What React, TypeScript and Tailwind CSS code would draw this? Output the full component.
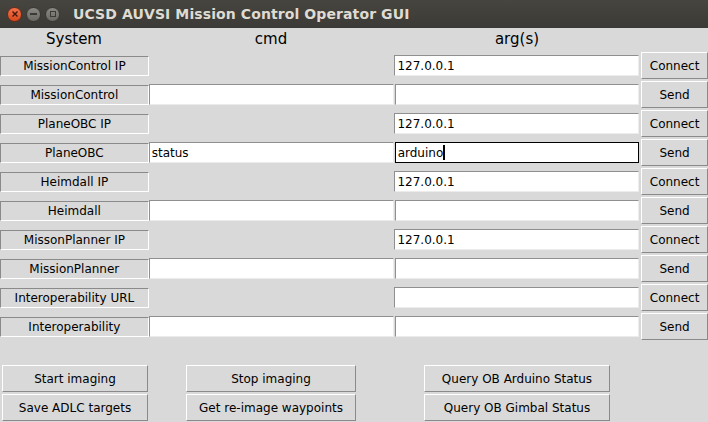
import React from "react";

const rows: { label: string; cmd?: string; arg?: string; argOnly?: boolean; btn: string; focus?: boolean }[] = [
  { label: "MissionControl IP", arg: "127.0.0.1", argOnly: true, btn: "Connect" },
  { label: "MissionControl", cmd: "", arg: "", btn: "Send" },
  { label: "PlaneOBC IP", arg: "127.0.0.1", argOnly: true, btn: "Connect" },
  { label: "PlaneOBC", cmd: "status", arg: "arduino", btn: "Send", focus: true },
  { label: "Heimdall IP", arg: "127.0.0.1", argOnly: true, btn: "Connect" },
  { label: "Heimdall", cmd: "", arg: "", btn: "Send" },
  { label: "MissonPlanner IP", arg: "127.0.0.1", argOnly: true, btn: "Connect" },
  { label: "MissionPlanner", cmd: "", arg: "", btn: "Send" },
  { label: "Interoperability URL", arg: "", argOnly: true, btn: "Connect" },
  { label: "Interoperability", cmd: "", arg: "", btn: "Send" },
];

function Entry({ value, focus }: { value: string; focus?: boolean }) {
  return (
    <div
      className={
        "w-[245px] h-[21px] bg-white flex items-center pl-[2px] text-[12px] text-black " +
        (focus
          ? "border border-black"
          : "border-t border-l border-t-[#8f8f8f] border-l-[#8f8f8f] border-b border-r border-b-[#ececec] border-r-[#ececec]")
      }
    >
      <span>{value}</span>
      {focus && <span className="w-[2px] h-[15px] bg-black"></span>}
    </div>
  );
}

function Btn({ children, w }: { children: React.ReactNode; w: string }) {
  return (
    <div
      className={
        w +
        " h-[27px] bg-[#d9d9d9] border-t border-l border-t-white border-l-white border-b border-r border-b-[#8a8a8a] border-r-[#8a8a8a] flex items-center justify-center text-[12px] text-black"
      }
    >
      {children}
    </div>
  );
}

export default function App() {
  return (
    <div
      className="w-[708px] h-[422px] bg-[#d9d9d9] overflow-hidden flex flex-col"
      style={{ fontFamily: '"DejaVu Sans", sans-serif' }}
    >
      {/* title bar */}
      <div className="h-[28px] bg-gradient-to-b from-[#46453f] to-[#3b3a36] flex items-center shrink-0">
        <div className="flex items-center gap-[4px] ml-[7px]">
          <div className="w-[15px] h-[15px] rounded-full bg-gradient-to-b from-[#f3714b] to-[#d8481b] border border-[#6b2c14] flex items-center justify-center">
            <svg width="8" height="8" viewBox="0 0 8 8">
              <path d="M1.5 1.5 L6.5 6.5 M6.5 1.5 L1.5 6.5" stroke="#3d1a0c" strokeWidth="1.4" />
            </svg>
          </div>
          <div className="w-[15px] h-[15px] rounded-full bg-gradient-to-b from-[#8a8984] to-[#6a6964] border border-[#3a3935] flex items-center justify-center">
            <div className="w-[7px] h-[2px] bg-[#3b3a36]"></div>
          </div>
          <div className="w-[15px] h-[15px] rounded-full bg-gradient-to-b from-[#8a8984] to-[#6a6964] border border-[#3a3935] flex items-center justify-center">
            <div className="w-[6px] h-[6px] border border-[#3b3a36]"></div>
          </div>
        </div>
        <div className="ml-[13px] text-[14px] font-bold text-[#dfdbd2] tracking-[0.1px]">
          UCSD AUVSI Mission Control Operator GUI
        </div>
      </div>

      {/* header */}
      <div className="h-[23px] flex items-center text-[15px] text-black shrink-0">
        <div className="w-[148px] text-center">System</div>
        <div className="w-[246px] text-center">cmd</div>
        <div className="w-[246px] text-center">arg(s)</div>
      </div>

      {/* rows */}
      <div className="flex flex-col">
        {rows.map((r, i) => (
          <div key={i} className="h-[29px] flex items-center">
            <div className="w-[149px] h-[20px] border-t border-l border-t-[#8a8a8a] border-l-[#8a8a8a] border-b border-r border-b-white border-r-white flex items-center justify-center text-[12px] text-black">
              {r.label}
            </div>
            <div className="w-[245px] flex">
              {!r.argOnly && <Entry value={r.cmd ?? ""} />}
            </div>
            <div className="w-[1px]"></div>
            <Entry value={r.arg ?? ""} focus={r.focus} />
            <div className="w-[2px]"></div>
            <Btn w="w-[67px]">{r.btn}</Btn>
          </div>
        ))}
      </div>

      {/* bottom buttons */}
      <div className="mt-[24px] flex flex-col gap-[2px]">
        <div className="flex">
          <div className="ml-[2px]"><Btn w="w-[146px]">Start imaging</Btn></div>
          <div className="ml-[38px]"><Btn w="w-[170px]">Stop imaging</Btn></div>
          <div className="ml-[68px]"><Btn w="w-[186px]">Query OB Arduino Status</Btn></div>
        </div>
        <div className="flex">
          <div className="ml-[2px]"><Btn w="w-[146px]">Save ADLC targets</Btn></div>
          <div className="ml-[38px]"><Btn w="w-[170px]">Get re-image waypoints</Btn></div>
          <div className="ml-[68px]"><Btn w="w-[186px]">Query OB Gimbal Status</Btn></div>
        </div>
      </div>
    </div>
  );
}
